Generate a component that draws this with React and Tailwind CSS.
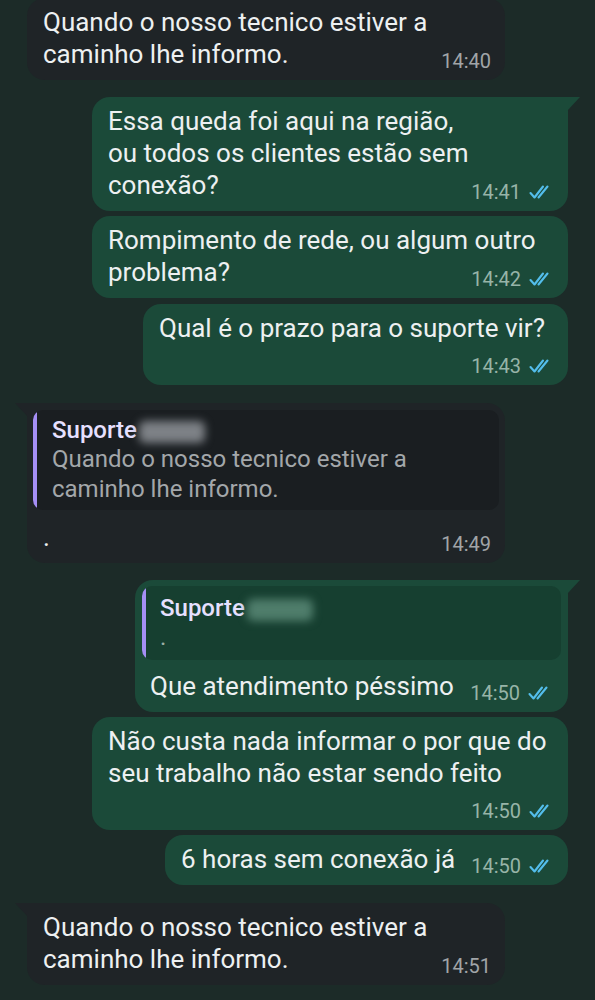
import React from "react";

const FONT = { fontFamily: "Roboto, 'Noto Sans', sans-serif" };

function Ticks() {
  return (
    <svg width="25" height="17" viewBox="0 0 25 17" fill="none" className="ml-[8px] mb-[2px]">
      <path d="M1.5 9 L5.5 13.5 L14 2.5" stroke="#53bdeb" strokeWidth="2.1" strokeLinecap="round" strokeLinejoin="round" />
      <path d="M9.5 13.5 L18.5 2.5" stroke="#53bdeb" strokeWidth="2.1" strokeLinecap="round" />
    </svg>
  );
}

function Time({ value, out }) {
  return (
    <span className={`flex items-end shrink-0 pl-3 translate-y-[2px] text-[20px] leading-[22px] ${out ? "text-[#97b4a8]" : "text-[#a1a5a8]"}`}>
      {value}
      {out && <Ticks />}
    </span>
  );
}

function Bubble({ out, tail, width, className = "", children }) {
  return (
    <div
      className={`relative rounded-[18px] ${out ? "bg-[#1b4a39] ml-auto mr-[27px]" : "bg-[#1f2427] ml-[27px]"} ${
        tail ? (out ? "rounded-tr-none" : "rounded-tl-none") : ""
      } ${width} ${className}`}
    >
      {tail && out && (
        <div className="absolute top-0 -right-[12px] w-[13px] h-[14px] bg-[#1b4a39] [clip-path:polygon(0_0,100%_0,0_100%)]" />
      )}
      {tail && !out && (
        <div className="absolute top-0 -left-[12px] w-[13px] h-[14px] bg-[#1f2427] [clip-path:polygon(0_0,100%_0,100%_100%)]" />
      )}
      {children}
    </div>
  );
}

// plain text message: lines given explicitly, time either inline with last line or on its own row
function TextMsg({ out, tail, width, lines, time, timeRow, className }) {
  const last = lines[lines.length - 1];
  return (
    <Bubble out={out} tail={tail} width={width} className={`pl-[16px] pr-[14px] pt-[8px] pb-[10px] ${className || ""}`}>
      <div className="text-[26px] leading-[32px] text-[#edf0f1]">
        {lines.slice(0, -1).map((l) => (
          <div key={l}>{l}</div>
        ))}
        {timeRow ? (
          <>
            <div>{last}</div>
            <div className="flex justify-end mt-[9px]">
              <Time value={time} out={out} />
            </div>
          </>
        ) : (
          <div className="flex items-end justify-between">
            <span>{last}</span>
            <Time value={time} out={out} />
          </div>
        )}
      </div>
    </Bubble>
  );
}

function Blurred({ green }) {
  return (
    <span
      className={`inline-block align-middle ml-[2px] w-[66px] h-[22px] rounded-md blur-[4px] ${
        green ? "bg-[#4f7d6b]" : "bg-[#7d8186]"
      }`}
    />
  );
}

export default function App() {
  return (
    <div style={FONT} className="w-[595px] h-[1000px] overflow-hidden bg-[#1c2b28] flex flex-col">
      <TextMsg
        className="-mt-[2px]"
        lines={["Quando o nosso tecnico estiver a", "caminho lhe informo."]}
        time="14:40"
        width="w-[478px]"
      />

      <TextMsg
        out
        tail
        className="mt-[17px]"
        width="w-[476px]"
        lines={["Essa queda foi aqui na região,", "ou todos os clientes estão sem", "conexão?"]}
        time="14:41"
      />
      <TextMsg
        out
        className="mt-[5px]"
        width="w-[476px]"
        lines={["Rompimento de rede, ou algum outro", "problema?"]}
        time="14:42"
      />
      <TextMsg
        out
        timeRow
        className="mt-[6px]"
        width="w-[425px]"
        lines={["Qual é o prazo para o suporte vir?"]}
        time="14:43"
      />

      {/* reply from support, quoting earlier message */}
      <Bubble tail width="w-[478px]" className="mt-[18px] px-[6px] pt-[7px] pb-[10px]">
        <div className="flex rounded-[10px] bg-[#1a1e21] overflow-hidden">
          <div className="w-[4px] shrink-0 bg-[#a58ff5] rounded-l-[10px]" />
          <div className="pl-[15px] pt-[6px] pb-[6px]">
            <div className="text-[24px] leading-[28px] font-medium text-[#e6e0ff]">
              Suporte
              <Blurred />
            </div>
            <div className="text-[24px] leading-[30px] text-[#a3a7aa]">
              <div>Quando o nosso tecnico estiver a</div>
              <div>caminho lhe informo.</div>
            </div>
          </div>
        </div>
        <div className="flex items-end justify-between mt-[11px] pl-[10px] pr-[8px] text-[26px] leading-[32px] text-[#edf0f1]">
          <span>.</span>
          <Time value="14:49" />
        </div>
      </Bubble>

      {/* my reply quoting support */}
      <Bubble out tail width="w-[433px]" className="mt-[17px] px-[7px] pt-[6px] pb-[10px]">
        <div className="flex rounded-[10px] bg-[#163f30] overflow-hidden">
          <div className="w-[4px] shrink-0 bg-[#a58ff5] rounded-l-[10px]" />
          <div className="pl-[14px] pt-[8px] pb-[8px]">
            <div className="text-[24px] leading-[28px] font-medium text-[#e6e0ff]">
              Suporte
              <Blurred green />
            </div>
            <div className="text-[24px] leading-[30px] text-[#9cb0a7]">.</div>
          </div>
        </div>
        <div className="flex items-end justify-between mt-[10px] pl-[8px] pr-[8px] text-[26px] leading-[32px] text-[#edf0f1]">
          <span>Que atendimento péssimo</span>
          <Time value="14:50" out />
        </div>
      </Bubble>

      <TextMsg
        out
        timeRow
        className="mt-[5px]"
        width="w-[476px]"
        lines={["Não custa nada informar o por que do", "seu trabalho não estar sendo feito"]}
        time="14:50"
      />
      <TextMsg
        out
        className="mt-[5px]"
        width="w-[403px]"
        lines={["6 horas sem conexão já"]}
        time="14:50"
      />

      <TextMsg
        tail
        className="mt-[18px]"
        width="w-[478px]"
        lines={["Quando o nosso tecnico estiver a", "caminho lhe informo."]}
        time="14:51"
      />
    </div>
  );
}
